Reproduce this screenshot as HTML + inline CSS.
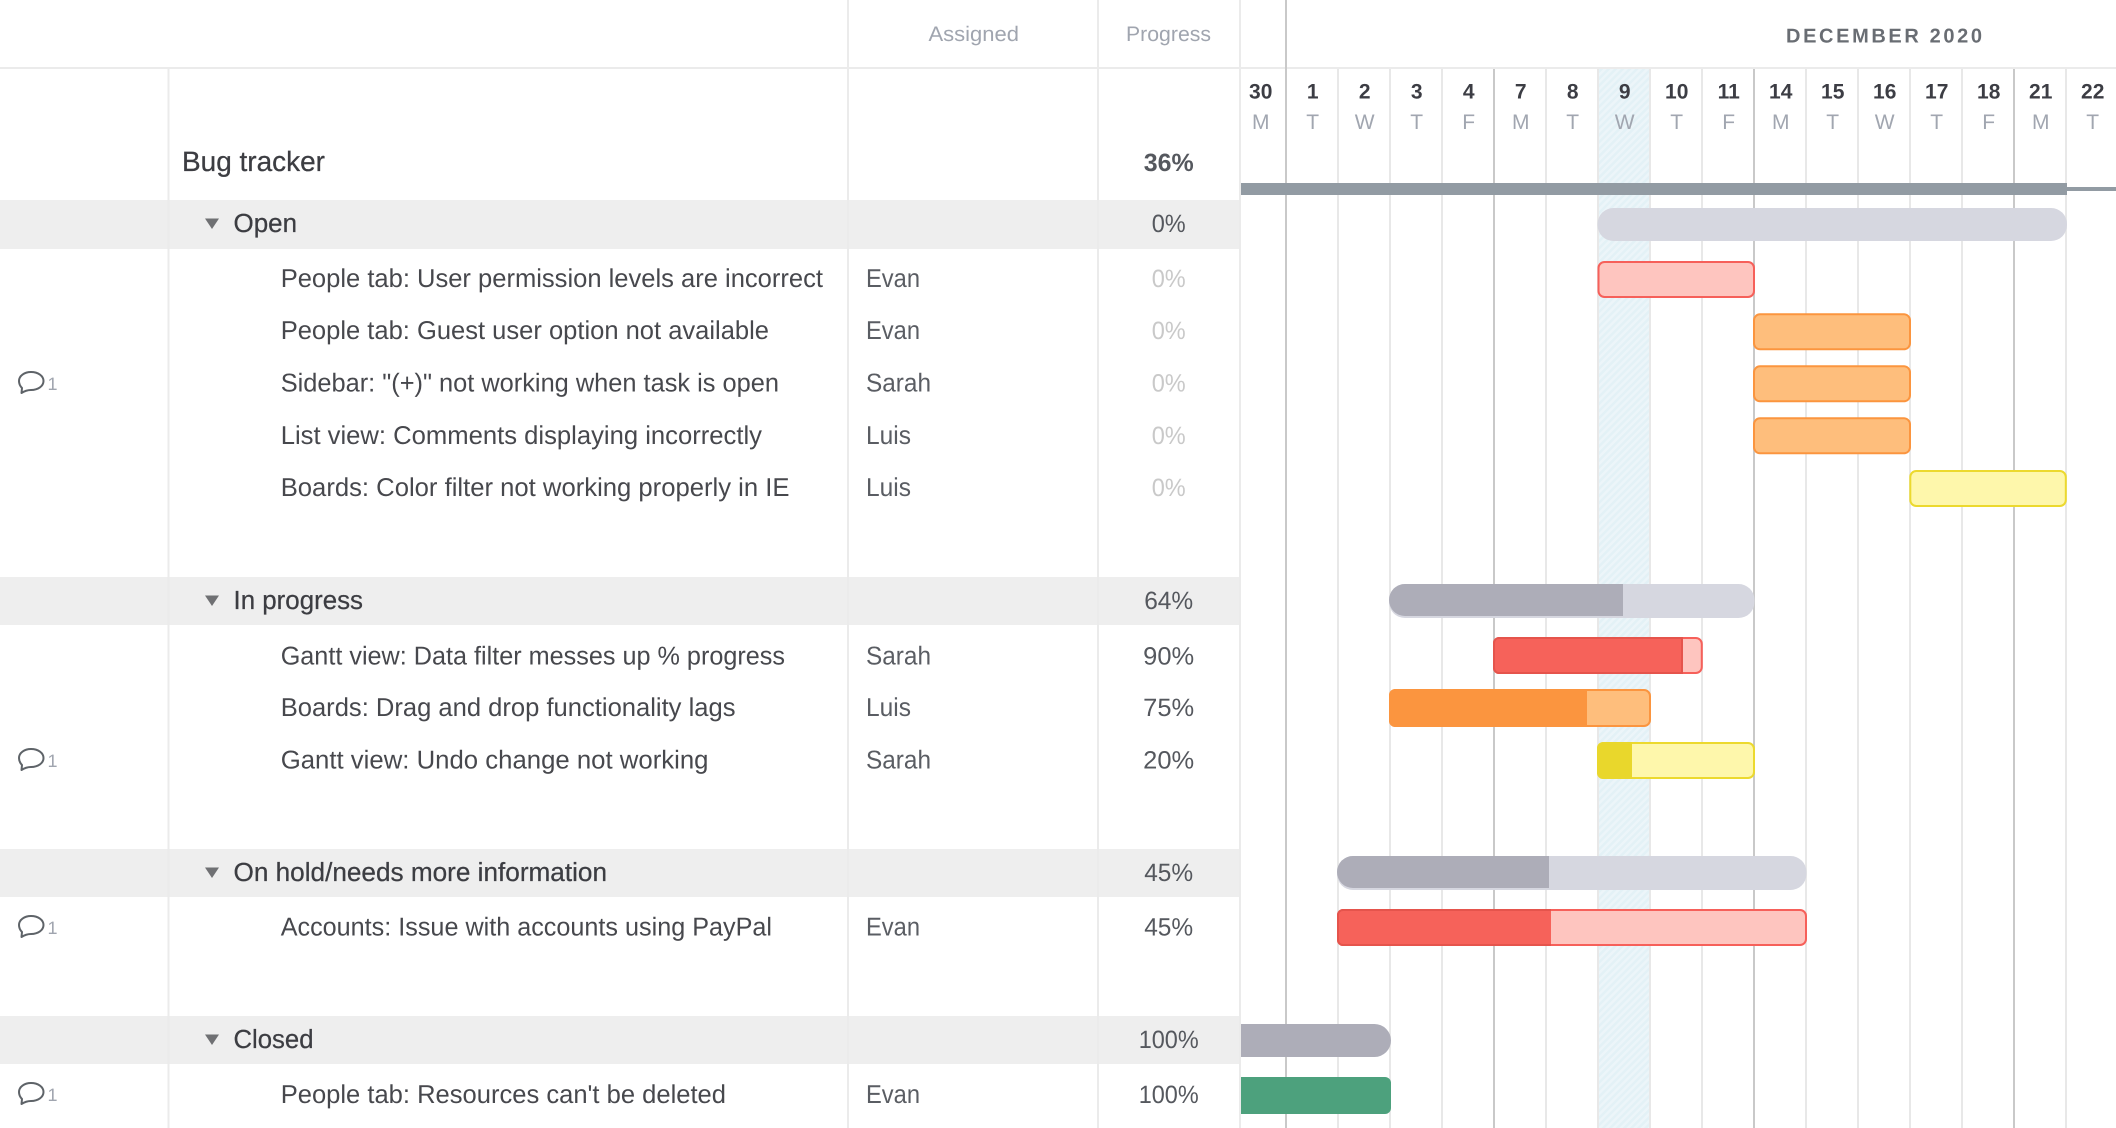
<!DOCTYPE html>
<html><head><meta charset="utf-8"><title>Bug tracker</title>
<style>
html,body{margin:0;padding:0;background:#fff;width:2116px;height:1128px;overflow:hidden}
svg{display:block}
text{font-family:"Liberation Sans",sans-serif;text-rendering:geometricPrecision}
.t{font-size:25.8px;fill:#47484d}
.g{font-size:26.2px;fill:#3c3d42;stroke:#3c3d42;stroke-width:.25px}
.a{font-size:25.8px;fill:#5a5d63}
.p{font-size:25px;fill:#55585e;text-anchor:middle}
.f{font-size:25px;fill:#c9c9c9;text-anchor:middle}
.h{font-size:21px;fill:#a0a5af}
.n{font-size:21px;font-weight:700;fill:#3c3d44;text-anchor:middle}
.d{font-size:21px;fill:#a1a6b0;text-anchor:middle}
.c{font-size:18px;fill:#a0a5af}
</style></head><body>
<svg xmlns="http://www.w3.org/2000/svg" width="2116" height="1128" viewBox="0 0 2116 1128">
<defs>
<pattern id="hatch" width="5" height="5" patternUnits="userSpaceOnUse" patternTransform="rotate(45)">
<rect width="5" height="5" fill="#ecf5f9"/><rect width="2.500" height="5" fill="#e3f1f6"/>
</pattern>
<g id="cm" fill="none" stroke="#5e6368" stroke-width="2" stroke-linejoin="round">
<path d="M21.5 393 L22 388 C19.8 385.8 19 383.4 19 381 C19 375.8 24.5 372 31 372 C38 372 43.5 375.8 43.5 381 C43.5 386.2 38 390 31 390 C28 390 25.5 390.4 21.5 393 Z"/>
</g>
</defs>

<rect width="2116" height="1128" fill="#fff"/>

<!-- group rows -->
<rect x="0" y="200" width="1239" height="49" fill="#eeeeee"/>
<rect x="0" y="577" width="1239" height="48" fill="#eeeeee"/>
<rect x="0" y="849" width="1239" height="48" fill="#eeeeee"/>
<rect x="0" y="1016" width="1239" height="48" fill="#eeeeee"/>

<!-- today column -->
<rect x="1598" y="69" width="53" height="1059" fill="url(#hatch)"/>

<!-- table lines -->
<g fill="#ebebeb">
<rect x="0" y="67" width="2116" height="2"/>
<rect x="167.500" y="69" width="2" height="1059"/>
<rect x="847" y="0" width="2" height="1128"/>
<rect x="1097" y="0" width="2" height="1128"/>
<rect x="1239" y="0" width="2" height="1128"/>
</g>
<!-- grid lines -->
<g fill="#e8e8e8">
<rect x="1337" y="69" width="2" height="1059"/>
<rect x="1389" y="69" width="2" height="1059"/>
<rect x="1441" y="69" width="2" height="1059"/>
<rect x="1545" y="69" width="2" height="1059"/>
<rect x="1597" y="69" width="2" height="1059"/>
<rect x="1649" y="69" width="2" height="1059"/>
<rect x="1701" y="69" width="2" height="1059"/>
<rect x="1805" y="69" width="2" height="1059"/>
<rect x="1857" y="69" width="2" height="1059"/>
<rect x="1909" y="69" width="2" height="1059"/>
<rect x="1961" y="69" width="2" height="1059"/>
<rect x="2065" y="69" width="2" height="1059"/>
</g>
<g fill="#c9c9c9">
<rect x="1285" y="0" width="2" height="1128"/>
<rect x="1493" y="69" width="2" height="1059"/>
<rect x="1753" y="69" width="2" height="1059"/>
<rect x="2013" y="69" width="2" height="1059"/>
</g>

<!-- header -->
<text class="h" x="928.500" y="41" textLength="90.500" lengthAdjust="spacingAndGlyphs">Assigned</text>
<text class="h" x="1126" y="41" textLength="85" lengthAdjust="spacingAndGlyphs">Progress</text>
<text x="1786" y="42.500" textLength="196" style="font-size:20px;font-weight:700;fill:#696d73">DECEMBER 2020</text>

<!-- days -->
<text class="n" x="1260.700" y="98.700">30</text><text class="d" x="1260.700" y="129">M</text>
<text class="n" x="1312.700" y="98.700">1</text><text class="d" x="1312.700" y="129">T</text>
<text class="n" x="1364.700" y="98.700">2</text><text class="d" x="1364.700" y="129">W</text>
<text class="n" x="1416.700" y="98.700">3</text><text class="d" x="1416.700" y="129">T</text>
<text class="n" x="1468.700" y="98.700">4</text><text class="d" x="1468.700" y="129">F</text>
<text class="n" x="1520.700" y="98.700">7</text><text class="d" x="1520.700" y="129">M</text>
<text class="n" x="1572.700" y="98.700">8</text><text class="d" x="1572.700" y="129">T</text>
<text class="n" x="1624.700" y="98.700">9</text><text class="d" x="1624.700" y="129">W</text>
<text class="n" x="1676.700" y="98.700">10</text><text class="d" x="1676.700" y="129">T</text>
<text class="n" x="1728.700" y="98.700">11</text><text class="d" x="1728.700" y="129">F</text>
<text class="n" x="1780.700" y="98.700">14</text><text class="d" x="1780.700" y="129">M</text>
<text class="n" x="1832.700" y="98.700">15</text><text class="d" x="1832.700" y="129">T</text>
<text class="n" x="1884.700" y="98.700">16</text><text class="d" x="1884.700" y="129">W</text>
<text class="n" x="1936.700" y="98.700">17</text><text class="d" x="1936.700" y="129">T</text>
<text class="n" x="1988.700" y="98.700">18</text><text class="d" x="1988.700" y="129">F</text>
<text class="n" x="2040.700" y="98.700">21</text><text class="d" x="2040.700" y="129">M</text>
<text class="n" x="2092.700" y="98.700">22</text><text class="d" x="2092.700" y="129">T</text>

<!-- project bar -->
<rect x="1241" y="183" width="826" height="12" fill="#929ba3"/>
<rect x="2067" y="187" width="49" height="4" fill="#929ba3"/>

<!-- Open -->
<rect x="1597.500" y="208" width="469.500" height="33" rx="16" fill="#d6d7e0"/>
<rect x="1598.500" y="262" width="155.500" height="35" rx="6" fill="#fec5bf" stroke="#f6605a" stroke-width="2"/>
<rect x="1754" y="314.300" width="156" height="35" rx="6" fill="#febe7c" stroke="#fb953f" stroke-width="2"/>
<rect x="1754" y="366.300" width="156" height="35" rx="6" fill="#febe7c" stroke="#fb953f" stroke-width="2"/>
<rect x="1754" y="418.300" width="156" height="35" rx="6" fill="#febe7c" stroke="#fb953f" stroke-width="2"/>
<rect x="1910.300" y="471" width="155.500" height="35" rx="6" fill="#fef7ab" stroke="#ecd92e" stroke-width="2"/>

<!-- In progress -->
<rect x="1389" y="584" width="365.500" height="34" rx="16" fill="#d6d7e0"/>
<path d="M1623 584 H1405 A16 16 0 0 0 1389 600 A16 16 0 0 0 1405 616 H1623 Z" fill="#adadb8"/>
<rect x="1494" y="638" width="207.800" height="35" rx="6" fill="#fec5bf" stroke="#f6605a" stroke-width="2"/>
<path d="M1682 637 H1499 A6 6 0 0 0 1493 643 V668 A6 6 0 0 0 1499 674 H1682 Z" fill="#f6625a"/>
<path d="M1682 638 H1499 A5 5 0 0 0 1494 643 V668 A5 5 0 0 0 1499 673 H1682 Z" fill="none" stroke="#e5544c" stroke-width="2"/>
<rect x="1390" y="690" width="260" height="36" rx="6" fill="#febe7c" stroke="#fb953f" stroke-width="2"/>
<path d="M1587 689 H1395 A6 6 0 0 0 1389 695 V721 A6 6 0 0 0 1395 727 H1587 Z" fill="#fb953f"/>
<rect x="1598" y="743" width="156" height="35" rx="6" fill="#fef7ab" stroke="#ecd92e" stroke-width="2"/>
<path d="M1632 742 H1603 A6 6 0 0 0 1597 748 V773 A6 6 0 0 0 1603 779 H1632 Z" fill="#e9d72c"/>

<!-- On hold -->
<rect x="1337" y="856" width="469.500" height="34" rx="16" fill="#d6d7e0"/>
<path d="M1549 856 H1353 A16 16 0 0 0 1337 872 A16 16 0 0 0 1353 888 H1549 Z" fill="#adadb8"/>
<rect x="1338" y="910" width="468" height="35" rx="6" fill="#fec5bf" stroke="#f6605a" stroke-width="2"/>
<path d="M1551 909 H1343 A6 6 0 0 0 1337 915 V940 A6 6 0 0 0 1343 946 H1551 Z" fill="#f6625a"/>
<path d="M1551 910 H1343 A5 5 0 0 0 1338 915 V940 A5 5 0 0 0 1343 945 H1551" fill="none" stroke="#e5544c" stroke-width="2"/>

<!-- Closed -->
<path d="M1241 1024 H1374.500 A16.500 16.500 0 0 1 1374.500 1057 H1241 Z" fill="#adadb8"/>
<path d="M1241 1077 H1385 A6 6 0 0 1 1391 1083 V1108 A6 6 0 0 1 1385 1114 H1241 Z" fill="#4da17d"/>

<!-- triangles -->
<g fill="#6f7073">
<path d="M205 218.500 H219 L212 229 Z"/>
<path d="M205 595.500 H219 L212 606 Z"/>
<path d="M205 867.500 H219 L212 878 Z"/>
<path d="M205 1034.500 H219 L212 1045 Z"/>
</g>

<!-- names -->
<text x="182" y="171" textLength="143" lengthAdjust="spacingAndGlyphs" style="font-size:28px;fill:#3c3d42;stroke:#3c3d42;stroke-width:.25px">Bug tracker</text>
<text class="g" x="233.500" y="232" textLength="63.500" lengthAdjust="spacingAndGlyphs">Open</text>
<text class="t" x="280.700" y="287" textLength="542.300" lengthAdjust="spacingAndGlyphs">People tab: User permission levels are incorrect</text>
<text class="t" x="280.700" y="339" textLength="488.300" lengthAdjust="spacingAndGlyphs">People tab: Guest user option not available</text>
<text class="t" x="280.700" y="391.500" textLength="498.300" lengthAdjust="spacingAndGlyphs">Sidebar: "(+)" not working when task is open</text>
<text class="t" x="280.700" y="444" textLength="481.300" lengthAdjust="spacingAndGlyphs">List view: Comments displaying incorrectly</text>
<text class="t" x="280.700" y="496" textLength="508.800" lengthAdjust="spacingAndGlyphs">Boards: Color filter not working properly in IE</text>
<text class="g" x="233.500" y="609" textLength="129.500" lengthAdjust="spacingAndGlyphs">In progress</text>
<text class="t" x="280.700" y="664.500" textLength="504.300" lengthAdjust="spacingAndGlyphs">Gantt view: Data filter messes up % progress</text>
<text class="t" x="280.700" y="716" textLength="454.800" lengthAdjust="spacingAndGlyphs">Boards: Drag and drop functionality lags</text>
<text class="t" x="280.700" y="768.500" textLength="427.800" lengthAdjust="spacingAndGlyphs">Gantt view: Undo change not working</text>
<text class="g" x="233.500" y="881" textLength="373.500" lengthAdjust="spacingAndGlyphs">On hold/needs more information</text>
<text class="t" x="280.700" y="935.500" textLength="491.300" lengthAdjust="spacingAndGlyphs">Accounts: Issue with accounts using PayPal</text>
<text class="g" x="233.500" y="1048" textLength="80" lengthAdjust="spacingAndGlyphs">Closed</text>
<text class="t" x="280.700" y="1103" textLength="445.300" lengthAdjust="spacingAndGlyphs">People tab: Resources can't be deleted</text>

<!-- assigned -->
<text class="a" x="866" y="287" textLength="54" lengthAdjust="spacingAndGlyphs">Evan</text>
<text class="a" x="866" y="339" textLength="54" lengthAdjust="spacingAndGlyphs">Evan</text>
<text class="a" x="866" y="391.500" textLength="65" lengthAdjust="spacingAndGlyphs">Sarah</text>
<text class="a" x="866" y="444" textLength="45" lengthAdjust="spacingAndGlyphs">Luis</text>
<text class="a" x="866" y="496" textLength="45" lengthAdjust="spacingAndGlyphs">Luis</text>
<text class="a" x="866" y="664.500" textLength="65" lengthAdjust="spacingAndGlyphs">Sarah</text>
<text class="a" x="866" y="716" textLength="45" lengthAdjust="spacingAndGlyphs">Luis</text>
<text class="a" x="866" y="768.500" textLength="65" lengthAdjust="spacingAndGlyphs">Sarah</text>
<text class="a" x="866" y="935.500" textLength="54" lengthAdjust="spacingAndGlyphs">Evan</text>
<text class="a" x="866" y="1103" textLength="54" lengthAdjust="spacingAndGlyphs">Evan</text>

<!-- progress -->
<text class="p" x="1168.700" y="171" textLength="50" lengthAdjust="spacingAndGlyphs" style="font-weight:700">36%</text>
<text class="p" x="1168.700" y="232" textLength="34" lengthAdjust="spacingAndGlyphs">0%</text>
<text class="f" x="1168.700" y="287" textLength="34" lengthAdjust="spacingAndGlyphs">0%</text>
<text class="f" x="1168.700" y="339" textLength="34" lengthAdjust="spacingAndGlyphs">0%</text>
<text class="f" x="1168.700" y="391.500" textLength="34" lengthAdjust="spacingAndGlyphs">0%</text>
<text class="f" x="1168.700" y="444" textLength="34" lengthAdjust="spacingAndGlyphs">0%</text>
<text class="f" x="1168.700" y="496" textLength="34" lengthAdjust="spacingAndGlyphs">0%</text>
<text class="p" x="1168.700" y="609" textLength="49" lengthAdjust="spacingAndGlyphs">64%</text>
<text class="p" x="1168.700" y="664.500" textLength="51" lengthAdjust="spacingAndGlyphs">90%</text>
<text class="p" x="1168.700" y="716" textLength="51" lengthAdjust="spacingAndGlyphs">75%</text>
<text class="p" x="1168.700" y="768.500" textLength="51" lengthAdjust="spacingAndGlyphs">20%</text>
<text class="p" x="1168.700" y="881" textLength="49" lengthAdjust="spacingAndGlyphs">45%</text>
<text class="p" x="1168.700" y="935.500" textLength="49" lengthAdjust="spacingAndGlyphs">45%</text>
<text class="p" x="1168.700" y="1048" textLength="60" lengthAdjust="spacingAndGlyphs">100%</text>
<text class="p" x="1168.700" y="1103" textLength="60" lengthAdjust="spacingAndGlyphs">100%</text>

<!-- comments -->
<use href="#cm"/><text class="c" x="47.500" y="390">1</text>
<use href="#cm" y="377"/><text class="c" x="47.500" y="767">1</text>
<use href="#cm" y="544"/><text class="c" x="47.500" y="934">1</text>
<use href="#cm" y="711"/><text class="c" x="47.500" y="1101">1</text>
</svg>
</body></html>
